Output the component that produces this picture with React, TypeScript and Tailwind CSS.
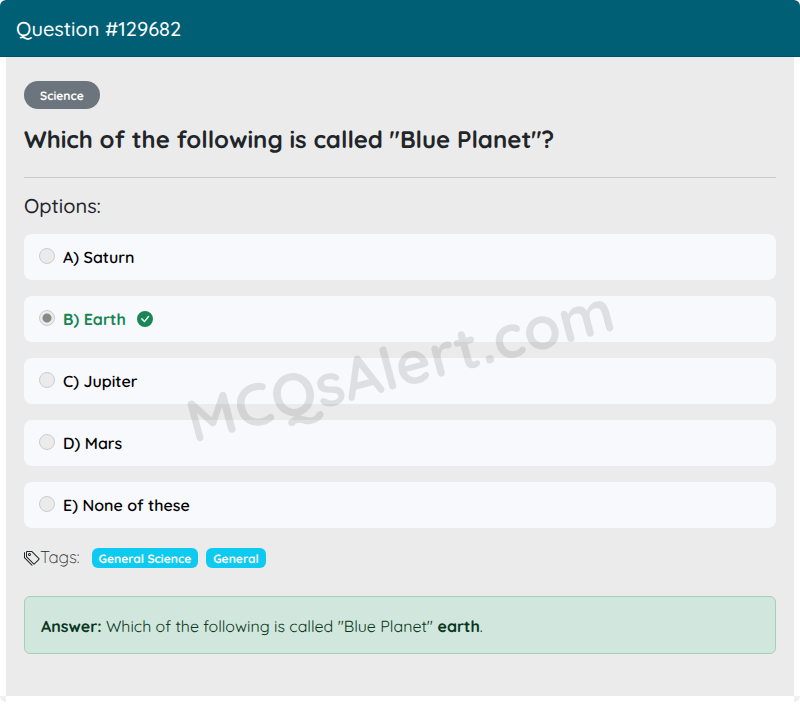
import React from "react";
import { BsCheckCircleFill, BsTags } from "react-icons/bs";

const options = [
  { key: "A", label: "Saturn", correct: false },
  { key: "B", label: "Earth", correct: true },
  { key: "C", label: "Jupiter", correct: false },
  { key: "D", label: "Mars", correct: false },
  { key: "E", label: "None of these", correct: false },
];

const tags = ["General Science", "General"];

const App: React.FC = () => {
  return (
    <main className="font-[Quicksand,Lato,sans-serif] text-base text-[#212529] [text-rendering:geometricPrecision]">
      {/* Card header */}
      <header className="rounded-t-md border-b border-[#034f63] bg-[#005f75] px-4 py-4">
        <h1 className="pt-px text-[20px] leading-[23px] font-medium text-white">Question #129682</h1>
      </header>

      {/* Card body */}
      <div className="mx-[6px] bg-[#ebebeb] px-[18px] pt-6 pb-[42px]">
        <span className="inline-flex h-7 items-center rounded-full bg-[#6c757d] px-4 pt-[2px] text-[12px] font-bold text-white align-top">
          Science
        </span>

        <h2 className="mt-4 text-[24px] leading-[29px] font-bold">
          Which of the following is called "Blue Planet"?
        </h2>

        <hr className="mt-[23px] border-[#c9cacb]" />

        <div className="relative">
          <h3 className="pt-4 text-[20px] leading-6 font-medium">Options:</h3>

          <ul className="mt-4 flex flex-col gap-4">
            {options.map((option) => (
              <li key={option.key} className="rounded-lg bg-[#f8f9fd] px-[15px]">
                <label className={`flex h-[46px] items-center gap-2 ${option.correct ? "font-bold text-[#198754]" : "font-semibold text-black"}`}>
                  <input
                    type="radio"
                    name="answer"
                    disabled
                    defaultChecked={option.correct}
                    className="mb-[2px] size-4 appearance-none rounded-full border border-[#cccdce] bg-[#ebebec] checked:bg-[radial-gradient(circle,#888888_4px,#ebebec_5px)]"
                  />
                  {option.key}) {option.label}
                  {option.correct && <BsCheckCircleFill size={16} className="ml-[3px]" />}
                </label>
              </li>
            ))}
          </ul>

          {/* Watermark */}
          <div className="pointer-events-none absolute inset-0 flex items-center justify-center pt-6">
            <span className="-rotate-15 text-[60px] leading-none font-bold text-black/10">MCQsAlert.com</span>
          </div>
        </div>

        <div className="mt-5 flex items-center">
          <BsTags size={16} />
          <span className="mr-3 text-[17px] leading-5 font-light">Tags:</span>
          <div className="flex gap-2">
            {tags.map((tag) => (
              <a
                key={tag}
                href="#"
                className="flex h-5 items-center rounded-md bg-[#0dcaf0] px-[7px] pt-[2px] text-[12px] font-bold text-white"
              >
                {tag}
              </a>
            ))}
          </div>
        </div>

        <p className="mt-7 rounded-md border border-[#a3cfbb] bg-[#d1e7dd] px-4 pt-[17px] pb-[15px] leading-6 text-[#0a3622]">
          <strong className="font-bold">Answer:</strong> Which of the following is called "Blue Planet" <strong className="font-bold">earth</strong>.
        </p>
      </div>

      {/* Bottom corners of the card */}
      <div className="flex justify-between">
        <span className="size-[6px] rounded-bl-md bg-[#f0f0f0]" />
        <span className="size-[6px] rounded-br-md bg-[#f0f0f0]" />
      </div>
    </main>
  );
};

export default App;
